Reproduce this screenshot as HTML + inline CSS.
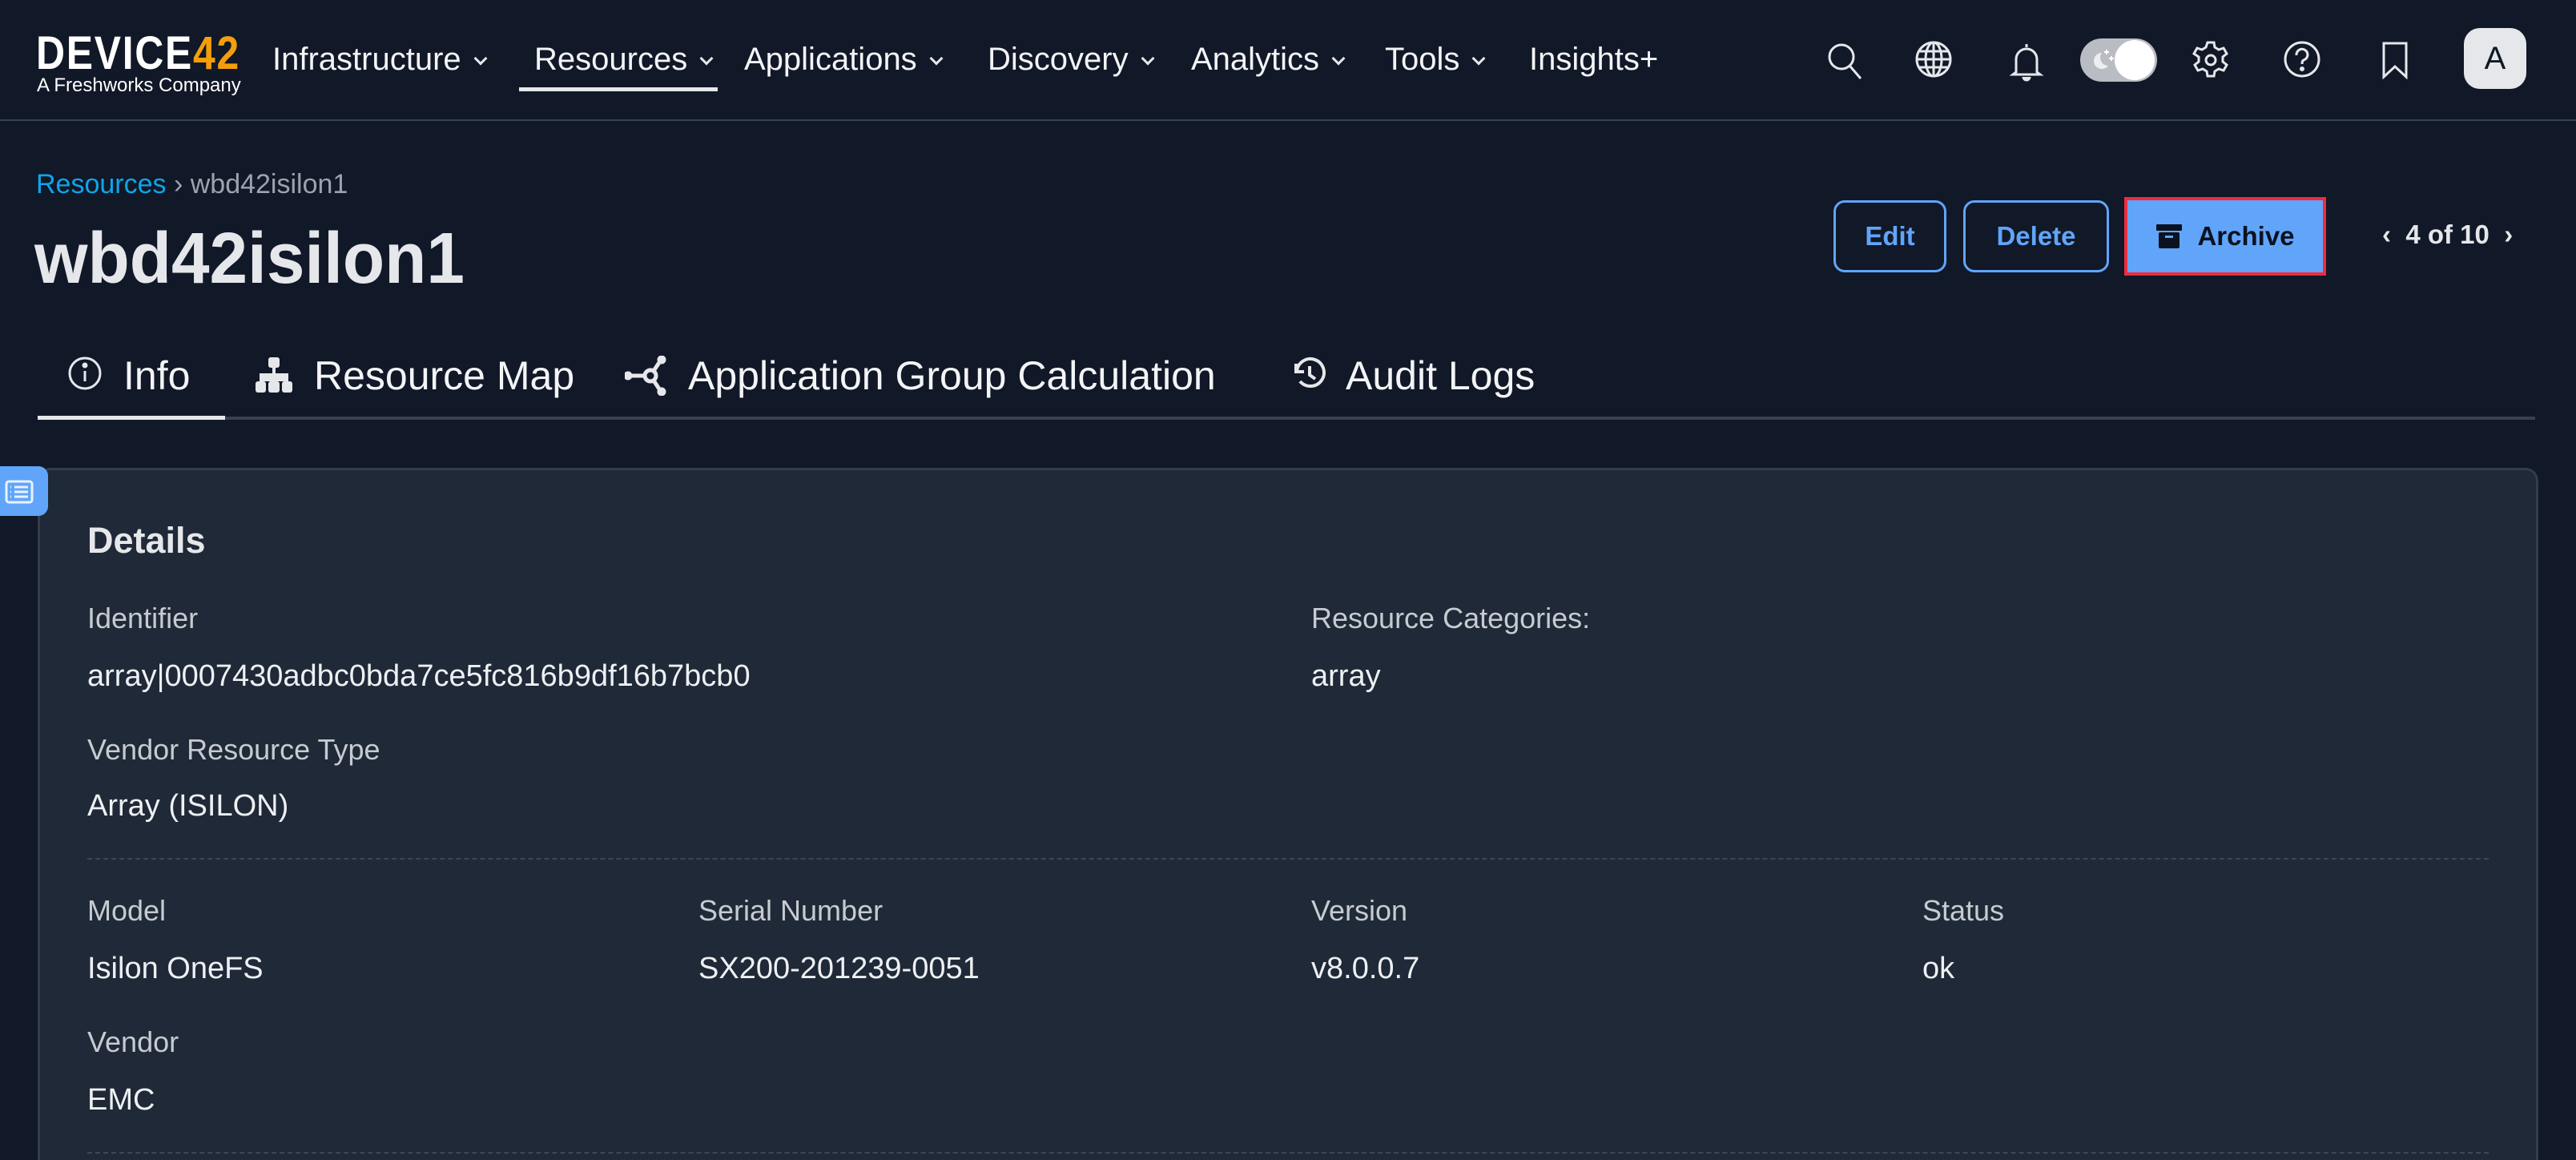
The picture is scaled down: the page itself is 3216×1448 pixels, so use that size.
<!DOCTYPE html>
<html style="width:3216px;height:1448px;overflow:hidden"><head><meta charset="utf-8"><style>
*{margin:0;padding:0;box-sizing:border-box}
body{width:3216px;height:1448px;background:#111827;font-family:"Liberation Sans",sans-serif;color:#e5e7eb;position:relative;overflow:hidden}
.a{position:absolute;white-space:nowrap}
.nav{font-size:40px;color:#f3f4f6;line-height:1;top:54px}
.chev{display:inline-block;width:12px;height:12px;border-right:3px solid #e5e7eb;border-bottom:3px solid #e5e7eb;transform:rotate(45deg);margin-left:18px;position:relative;top:-8px}
.tab{font-size:50px;color:#f3f4f6;top:444px;line-height:1}
.lbl{font-size:36px;color:#c7cbd1;line-height:1}
.val{font-size:38px;color:#eef0f3;line-height:1}
.btn{position:absolute;border:3px solid #60a5fa;border-radius:14px;color:#60a5fa;font-size:33px;font-weight:bold;display:flex;align-items:center;justify-content:center}
svg{position:absolute}
</style></head><body>
<!-- nav -->
<div class="a" style="left:45px;top:38px;font-size:58px;font-weight:bold;color:#fff;letter-spacing:2px;line-height:1;transform:scaleX(.86);transform-origin:left">DEVICE<span style="color:#f59e0b">42</span></div>
<div class="a" style="left:46px;top:95px;font-size:24px;color:#fff;line-height:1">A Freshworks Company</div>
<div class="a nav" style="left:340px">Infrastructure<span class="chev"></span></div>
<div class="a nav" style="left:667px">Resources<span class="chev"></span></div>
<div class="a nav" style="left:929px">Applications<span class="chev"></span></div>
<div class="a nav" style="left:1233px">Discovery<span class="chev"></span></div>
<div class="a nav" style="left:1487px">Analytics<span class="chev"></span></div>
<div class="a nav" style="left:1729px">Tools<span class="chev"></span></div>
<div class="a nav" style="left:1909px">Insights+</div>
<div class="a" style="left:648px;top:109px;width:248px;height:5px;background:#e5e7eb"></div>
<div class="a" style="left:0;top:149px;width:3216px;height:2px;background:#374151"></div>
<!-- icons -->
<svg style="left:2280px;top:52px" width="46" height="48" viewBox="0 0 46 48" fill="none" stroke="#e5e7eb" stroke-width="3"><circle cx="19" cy="19" r="15"/><path d="M30 31l13 15"/></svg>
<svg style="left:2390px;top:50px" width="48" height="48" viewBox="0 0 48 48" fill="none" stroke="#e5e7eb" stroke-width="3"><circle cx="24" cy="24" r="21"/><ellipse cx="24" cy="24" rx="10" ry="21"/><path d="M3 24h42M6 14h36M6 34h36M24 3v42"/></svg>
<svg style="left:2508px;top:52px" width="44" height="50" viewBox="0 0 44 50" fill="none" stroke="#e5e7eb" stroke-width="3"><path d="M22 3v4M9 38V22a13 13 0 0 1 26 0v16l4 3H5z"/><path d="M18 44a4 4 0 0 0 8 0" fill="#e5e7eb"/></svg>
<div class="a" style="left:2597px;top:48px;width:96px;height:54px;border-radius:27px;background:#b9bcc2"></div>
<div class="a" style="left:2640px;top:50px;width:50px;height:50px;border-radius:25px;background:#fff"></div>
<svg style="left:2610px;top:60px" width="30" height="30" viewBox="0 0 30 30"><path d="M14 6a10 10 0 1 0 8 16a10 10 0 0 1-8-16z" fill="#eceef0"/><path d="M20 2v6M17 5h6M26 10v6M23 13h6" stroke="#fff" stroke-width="2"/></svg>
<svg style="left:2736px;top:50px" width="48" height="50" viewBox="0 0 48 50" fill="none" stroke="#e5e7eb" stroke-width="3"><path d="M20 3h8l1 6 5 3 6-2 4 7-5 4v6l5 4-4 7-6-2-5 3-1 6h-8l-1-6-5-3-6 2-4-7 5-4v-6L3 17l4-7 6 2 5-3z"/><circle cx="24" cy="25" r="6"/></svg>
<svg style="left:2850px;top:50px" width="48" height="48" viewBox="0 0 48 48" fill="none" stroke="#e5e7eb" stroke-width="3"><circle cx="24" cy="24" r="21"/><path d="M17 19a7 7 0 1 1 9 6c-2 1-2 3-2 5"/><circle cx="24" cy="36" r="1.5" fill="#e5e7eb"/></svg>
<svg style="left:2972px;top:51px" width="36" height="48" viewBox="0 0 36 48" fill="none" stroke="#e5e7eb" stroke-width="3"><path d="M4 3h28v42L18 32 4 45z"/></svg>
<div class="a" style="left:3076px;top:35px;width:78px;height:76px;border-radius:20px;background:#e5e7eb;color:#111827;font-size:40px;display:flex;align-items:center;justify-content:center">A</div>
<!-- header -->
<div class="a" style="left:45px;top:213px;font-size:34px;line-height:1"><span style="color:#0ea5e9">Resources</span><span style="color:#9ca3af"> › wbd42isilon1</span></div>
<div class="a" style="left:43px;top:278px;font-size:90px;font-weight:bold;color:#e5e7eb;line-height:1;transform:scaleX(.95);transform-origin:left">wbd42isilon1</div>
<div class="btn" style="left:2289px;top:250px;width:141px;height:90px">Edit</div>
<div class="btn" style="left:2451px;top:250px;width:182px;height:90px">Delete</div>
<div class="a" style="left:2652px;top:246px;width:252px;height:98px;border:4px solid #ef2b3c;background:#60a5fa;color:#0b1220;font-size:33px;font-weight:bold;display:flex;align-items:center;justify-content:center"><svg style="position:static;margin-right:18px" width="34" height="34" viewBox="0 0 34 34"><rect x="1" y="2" width="32" height="8" rx="1" fill="#0b1220"/><rect x="4" y="12" width="26" height="20" rx="2" fill="#0b1220"/><rect x="12" y="16" width="10" height="3" fill="#60a5fa"/></svg>Archive</div>
<div class="a" style="left:2974px;top:276px;font-size:33px;font-weight:bold;color:#e5e7eb;line-height:1">‹&nbsp;&nbsp;4 of 10&nbsp;&nbsp;›</div>
<!-- tabs -->
<svg style="left:84px;top:444px" width="44" height="44" viewBox="0 0 44 44" fill="none" stroke="#e5e7eb" stroke-width="3"><circle cx="22" cy="22" r="19"/><path d="M22 19v13"/><circle cx="22" cy="12" r="2" fill="#e5e7eb"/></svg>
<div class="a tab" style="left:154px">Info</div>
<svg style="left:318px;top:446px" width="48" height="46" viewBox="0 0 48 46" fill="#e5e7eb"><rect x="17" y="0" width="14" height="13" rx="3"/><path d="M24 13v9M8 30v-8h32v8M24 22v8" stroke="#e5e7eb" stroke-width="4"/><rect x="1" y="30" width="13" height="14" rx="3"/><rect x="17" y="30" width="14" height="14" rx="3"/><rect x="34" y="30" width="13" height="14" rx="3"/></svg>
<div class="a tab" style="left:392px">Resource Map</div>
<svg style="left:780px;top:444px" width="56" height="50" viewBox="0 0 56 50" fill="none" stroke="#e5e7eb" stroke-width="5"><circle cx="32" cy="25" r="7"/><path d="M4 25h21M36 19l8-12M36 31l8 12"/><circle cx="4" cy="25" r="3" fill="#e5e7eb"/><circle cx="46" cy="5" r="3" fill="#e5e7eb"/><circle cx="46" cy="45" r="3" fill="#e5e7eb"/></svg>
<div class="a tab" style="left:859px">Application Group Calculation</div>
<svg style="left:1612px;top:444px" width="46" height="46" viewBox="0 0 46 46" fill="none" stroke="#e5e7eb" stroke-width="4"><path d="M6 10v10h10"/><path d="M7 20a17 17 0 1 1 4 12"/><path d="M23 13v11l7 5"/></svg>
<div class="a tab" style="left:1680px">Audit Logs</div>
<div class="a" style="left:47px;top:520px;width:3118px;height:4px;background:#374151"></div>
<div class="a" style="left:47px;top:519px;width:234px;height:5px;background:#e5e7eb"></div>
<!-- card -->
<div class="a" style="left:47px;top:584px;width:3122px;height:864px;background:#1f2937;border:3px solid #323c4b;border-bottom:none;border-radius:16px 16px 0 0"></div>
<div class="a" style="left:0;top:582px;width:60px;height:62px;background:#60a5fa;border-radius:0 12px 12px 0"></div>
<svg style="left:6px;top:599px" width="36" height="30" viewBox="0 0 36 30" fill="none" stroke="#eaf2ff" stroke-width="3"><rect x="2" y="2" width="32" height="26" rx="3"/><path d="M12 9h17M12 15h17M12 21h17"/><path d="M7 9h1M7 15h1M7 21h1"/></svg>
<div class="a" style="left:109px;top:652px;font-size:45px;font-weight:bold;color:#e5e7eb;line-height:1">Details</div>
<div class="a lbl" style="left:109px;top:754px">Identifier</div>
<div class="a val" style="left:109px;top:825px">array|0007430adbc0bda7ce5fc816b9df16b7bcb0</div>
<div class="a lbl" style="left:1637px;top:754px">Resource Categories:</div>
<div class="a val" style="left:1637px;top:825px">array</div>
<div class="a lbl" style="left:109px;top:918px">Vendor Resource Type</div>
<div class="a val" style="left:109px;top:987px">Array (ISILON)</div>
<div class="a" style="left:109px;top:1071px;width:2998px;border-top:2px dashed #3c4656"></div>
<div class="a lbl" style="left:109px;top:1119px">Model</div>
<div class="a val" style="left:109px;top:1190px">Isilon OneFS</div>
<div class="a lbl" style="left:872px;top:1119px">Serial Number</div>
<div class="a val" style="left:872px;top:1190px">SX200-201239-0051</div>
<div class="a lbl" style="left:1637px;top:1119px">Version</div>
<div class="a val" style="left:1637px;top:1190px">v8.0.0.7</div>
<div class="a lbl" style="left:2400px;top:1119px">Status</div>
<div class="a val" style="left:2400px;top:1190px">ok</div>
<div class="a lbl" style="left:109px;top:1283px">Vendor</div>
<div class="a val" style="left:109px;top:1354px">EMC</div>
<div class="a" style="left:109px;top:1438px;width:2998px;border-top:2px dashed #3c4656"></div>
</body></html>
